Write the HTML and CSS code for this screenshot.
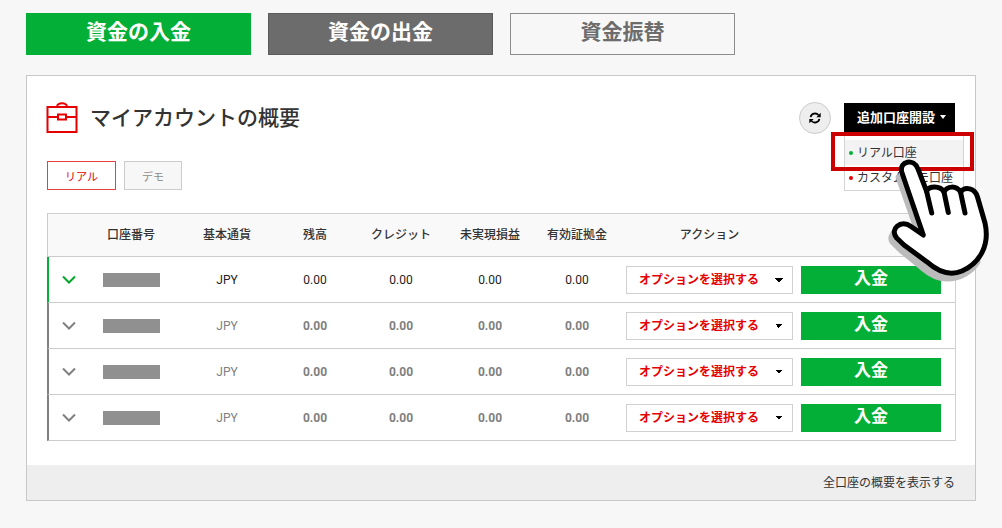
FILE: index.html
```html
<!DOCTYPE html>
<html lang="ja">
<head>
<meta charset="utf-8">
<meta name="viewport" content="width=device-width, initial-scale=1">
<title>マイアカウントの概要</title>
<link rel="stylesheet" href="styles.css">
</head>
<body>
<main class="page">
  <nav class="funds">
    <button type="button" class="fund fund-deposit">資金の入金</button>
    <button type="button" class="fund fund-withdraw">資金の出金</button>
    <button type="button" class="fund fund-transfer">資金振替</button>
  </nav>

  <section class="panel">
    <div class="panel-body">
      <header class="panel-head">
        <svg class="briefcase" viewBox="0 0 31 32" aria-hidden="true">
          <path d="M.5 5h29v25H.5zM.5 15h10.500M19 15h10.500M11 12.500h8v5h-8zM10 5c0-5 10-5 10 0"/>
        </svg>
        <h1 class="title">マイアカウントの概要</h1>
        <button type="button" class="refresh" aria-label="更新">
          <svg viewBox="0 0 16 16" aria-hidden="true">
            <path class="arc" d="M3 7c.6-4 6.200-5.600 9-2.400M13 9c-.6 4-6.200 5.600-9 2.400"/>
            <path class="tip" d="M14.500 2v5H9.500zM1.500 14V9h5z"/>
          </svg>
        </button>
        <div class="dropdown">
          <button type="button" class="dropdown-toggle">追加口座開設<span class="caret"></span></button>
          <ul class="menu">
            <li><a class="menu-item active" href="#">リアル口座</a></li>
            <li><a class="menu-item" href="#">カスタムデモ口座</a></li>
          </ul>
          <div class="highlight"></div>
          <svg class="hand" viewBox="0 0 102 126" aria-hidden="true">
            <path class="shadow" d="M8 17L29 77L20 72C10 65-3 74 2 82L10 90L32 108C40 115 48 119 57 119C70 119 82 112 88 102L60 60L24 16Z"/>
            <path class="shape" d="M11.700 12C9 1 24-2 28 9L36.500 31C39 26 50 25 54 32C57 26 66 25 70.500 32C75 26 85 28 87.500 37L95 63C100 85 90 103 72 111C58 117 46 110 36.700 101.700L14 85L6.700 78C-1 69 11 59 21 66.500L33.300 75Z"/>
            <path class="fingers" d="M36.500 31L41.700 53M54 32L58.300 52.500M70.500 32L75 53"/>
          </svg>
        </div>
      </header>

      <div class="tabs">
        <button type="button" class="tab tab-on">リアル</button>
        <button type="button" class="tab tab-off">デモ</button>
      </div>

      <table class="accounts">
        <colgroup>
          <col class="c-toggle"><col class="c-number"><col class="c-currency"><col class="c-balance"><col class="c-credit"><col class="c-profit"><col class="c-margin"><col class="c-action"><col class="c-deposit">
        </colgroup>
        <thead>
          <tr><th></th><th>口座番号</th><th>基本通貨</th><th>残高</th><th>クレジット</th><th>未実現損益</th><th>有効証拠金</th><th>アクション</th><th></th></tr>
        </thead>
        <tbody>
          <tr class="current">
            <td><button type="button" class="expand" aria-label="詳細"><svg viewBox="0 0 14 9" aria-hidden="true"><path d="M1 1.500L7 7.500l6-6"/></svg></button></td>
            <td><span class="mask"></span></td><td>JPY</td><td class="num">0.00</td><td class="num">0.00</td><td class="num">0.00</td><td class="num">0.00</td>
            <td class="action"><select class="options" aria-label="アクション"><option>オプションを選択する</option></select></td>
            <td class="deposit-cell"><button type="button" class="deposit">入金</button></td>
          </tr>
          <tr>
            <td><button type="button" class="expand" aria-label="詳細"><svg viewBox="0 0 14 9" aria-hidden="true"><path d="M1 1.500L7 7.500l6-6"/></svg></button></td>
            <td><span class="mask"></span></td><td>JPY</td><td class="num">0.00</td><td class="num">0.00</td><td class="num">0.00</td><td class="num">0.00</td>
            <td class="action"><select class="options" aria-label="アクション"><option>オプションを選択する</option></select></td>
            <td class="deposit-cell"><button type="button" class="deposit">入金</button></td>
          </tr>
          <tr>
            <td><button type="button" class="expand" aria-label="詳細"><svg viewBox="0 0 14 9" aria-hidden="true"><path d="M1 1.500L7 7.500l6-6"/></svg></button></td>
            <td><span class="mask"></span></td><td>JPY</td><td class="num">0.00</td><td class="num">0.00</td><td class="num">0.00</td><td class="num">0.00</td>
            <td class="action"><select class="options" aria-label="アクション"><option>オプションを選択する</option></select></td>
            <td class="deposit-cell"><button type="button" class="deposit">入金</button></td>
          </tr>
          <tr>
            <td><button type="button" class="expand" aria-label="詳細"><svg viewBox="0 0 14 9" aria-hidden="true"><path d="M1 1.500L7 7.500l6-6"/></svg></button></td>
            <td><span class="mask"></span></td><td>JPY</td><td class="num">0.00</td><td class="num">0.00</td><td class="num">0.00</td><td class="num">0.00</td>
            <td class="action"><select class="options" aria-label="アクション"><option>オプションを選択する</option></select></td>
            <td class="deposit-cell"><button type="button" class="deposit">入金</button></td>
          </tr>
        </tbody>
      </table>
    </div>
    <footer class="panel-foot"><a href="#">全口座の概要を表示する</a></footer>
  </section>
</main>
</body>
</html>
```
FILE: styles.css
```css
* { box-sizing: border-box; }

body {
  margin: 0;
  background: #f7f7f7;
  color: #333;
  font: 12px/16px Roboto, "Noto Sans CJK JP", sans-serif;
}

button, select { font-family: inherit; margin: 0; border-radius: 0; cursor: pointer; }
a { color: inherit; text-decoration: none; }

.page { padding: 13px 26px 26px; }

.funds { display: flex; flex-wrap: wrap; gap: 17px; margin-bottom: 20px; }
.fund {
  width: 225px;
  height: 42px;
  padding: 0 0 5px;
  border: 1px solid;
  font-size: 21px;
  line-height: 24px;
  font-weight: 700;
}
.fund-deposit { background: #04af37; border-color: #04af37; color: #fff; }
.fund-withdraw { background: #6c6c6c; border-color: #5c5c5c; color: #fff; }
.fund-transfer { background: transparent; border-color: #8c8c8c; color: #6c6c6c; }

.panel { background: #fff; border: 1px solid #c8c8c8; }
.panel-body { padding: 26px 20px 24px; }

.panel-head { display: flex; align-items: center; height: 32px; }
.briefcase { width: 31px; height: 32px; fill: none; stroke: #e60000; stroke-width: 2; overflow: visible; }
.title { margin: 0 auto 0 12px; font-size: 21px; line-height: 32px; font-weight: 500; }

.refresh {
  display: grid;
  place-items: center;
  width: 32px;
  height: 32px;
  padding: 0;
  margin-right: 13px;
  border: 1px solid #ccc;
  border-radius: 50%;
  background: #eee;
}
.refresh svg { width: 14px; height: 14px; }
.refresh .arc { fill: none; stroke: #000; stroke-width: 2; }
.refresh .tip { fill: #000; }

.dropdown { position: relative; }
.dropdown-toggle {
  display: flex;
  align-items: center;
  gap: 5px;
  height: 30px;
  padding: 0 8px 3px 12px;
  border: 1px solid #000;
  background: #000;
  color: #fff;
  font-size: 13px;
  font-weight: 700;
}
.caret { border: 3px solid transparent; border-top: 4px solid #fff; border-bottom: 0; }

.menu {
  position: absolute;
  top: 29px;
  left: 0;
  width: 120px;
  margin: 0;
  padding: 7px 0 0;
  border: 1px solid #d4d4d4;
  background: #fff;
  list-style: none;
}
.menu-item { display: flex; align-items: center; gap: 4px; height: 25px; padding-left: 4px; white-space: nowrap; }
.menu-item::before { content: ""; width: 4px; height: 4px; border-radius: 50%; background: #e60000; }
.menu-item.active { background: #f3f3f3; }
.menu-item.active::before { background: #04af37; }

.highlight { position: absolute; top: 29px; left: -13px; width: 143px; height: 39px; border: 4px solid #cc0000; }

.hand { position: absolute; z-index: 1; top: 57px; left: 46px; width: 102px; height: 126px; overflow: visible; }
.hand .shadow { fill: #bbb; stroke: #bbb; stroke-width: 5; stroke-linejoin: round; }
.hand .shape { fill: #fff; stroke: #000; stroke-width: 5; stroke-linejoin: round; }
.hand .fingers { fill: none; stroke: #000; stroke-width: 5; stroke-linecap: round; }

.tabs { display: flex; gap: 8px; margin: 27px 0 23px; }
.tab { height: 29px; padding: 0 17px; font-size: 11px; }
.tab-on { border: 1px solid #e64040; background: #fff; color: #e60000; }
.tab-off { border: 1px solid #ccc; background: #f7f7f7; color: #8c8c8c; }

.accounts {
  width: 100%;
  table-layout: fixed;
  border: 1px solid #d0d0d0;
  border-left: 0;
  border-bottom: 0;
  border-spacing: 0;
  text-align: center;
}
.c-toggle { width: 41px; }
.c-number { width: 86px; }
.c-currency { width: 106px; }
.c-balance { width: 70px; }
.c-credit { width: 102px; }
.c-profit { width: 76px; }
.c-margin { width: 98px; }
.c-action { width: 171px; }
.c-deposit { width: 158px; }

th { height: 43px; padding: 0; border-bottom: 1px solid #ccc; background: #f9f9f9; font-weight: 500; white-space: nowrap; }
th:first-child { border-left: 1px solid #ccc; }
td { height: 46px; padding: 0; border-bottom: 1px solid #ccc; color: #808080; }
td:first-child { border-left: 2px solid #808080; }
th:nth-child(8), .action { padding-right: 4px; }
.num { font-weight: 700; }
.current td { color: #222; }
.current td:first-child { border-left-color: #04af37; }
.current .num { font-weight: 400; }

.expand { display: block; width: 14px; height: 9px; padding: 0; margin: 0 auto; border: 0; background: none; }
.expand svg { display: block; width: 14px; height: 9px; fill: none; stroke: #808080; stroke-width: 2; }
.current .expand svg { stroke: #04a52a; }

.mask { display: block; width: 57px; height: 14px; margin: 0 auto; background: #909090; }

.options {
  display: block;
  width: 100%;
  height: 28px;
  padding: 0 12px;
  border: 1px solid #d0d0d0;
  appearance: none;
  background:
    linear-gradient(to top right, transparent 50%, #000 50%) no-repeat right 13px center / 4px 4px,
    linear-gradient(to top left, transparent 50%, #000 50%) no-repeat right 9px center / 4px 4px,
    #fff;
  color: #e60000;
  font-size: 12px;
  font-weight: 700;
}
.deposit-cell { padding: 0 14px 0 4px; }
.deposit {
  display: block;
  width: 100%;
  height: 28px;
  padding: 0 0 3px;
  border: 0;
  background: #04af37;
  color: #fff;
  font-size: 17px;
  line-height: 20px;
  font-weight: 700;
}

.panel-foot { display: flex; align-items: center; justify-content: flex-end; height: 35px; padding: 0 20px; background: #eee; }
```
